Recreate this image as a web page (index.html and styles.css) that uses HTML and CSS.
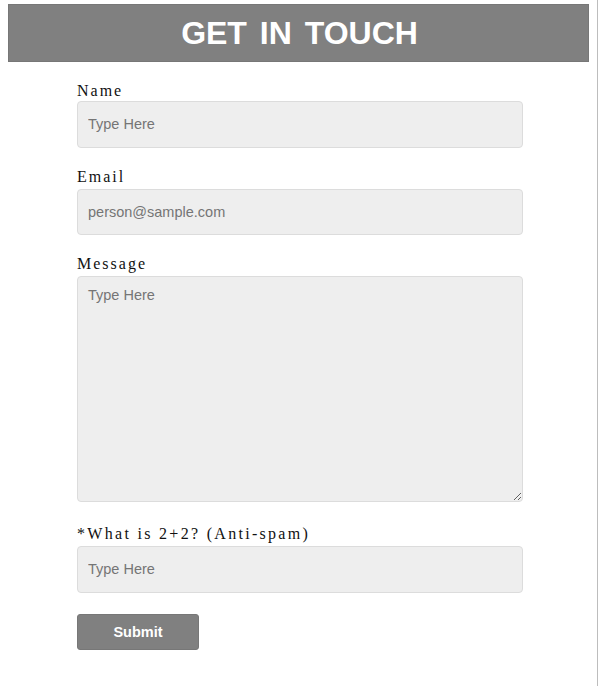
FILE: index.html
```html
<!DOCTYPE html>
<html>
<head>
<meta charset="utf-8">
<link rel="stylesheet" href="styles.css">
</head>
<body>
<div class="page">
  <header class="banner"><h1 class="banner-title">GET IN TOUCH</h1></header>
  <form class="contact">
    <label class="field-label field-label-first" for="name">Name</label>
    <input class="field-input" id="name" type="text" placeholder="Type Here">
    <label class="field-label" for="email">Email</label>
    <input class="field-input" id="email" type="email" placeholder="person@sample.com">
    <label class="field-label" for="msg">Message</label>
    <textarea class="field-input field-area" id="msg" placeholder="Type Here"></textarea>
    <label class="field-label field-label-wide" for="spam">*What is 2+2? (Anti-spam)</label>
    <input class="field-input" id="spam" type="text" placeholder="Type Here">
    <button class="submit" type="button">Submit</button>
  </form>
</div>
</body>
</html>
```

FILE: styles.css
```css
html, body {
  margin: 0;
  padding: 0;
  background: #fff;
}
.page {
  width: 598px;
  min-height: 686px;
  box-sizing: border-box;
  border-right: 1px solid #bdbdbd;
  padding-top: 4px;
}
.banner {
  margin: 0 8px;
  height: 58px;
  box-sizing: border-box;
  background: #808080;
  border: 1px solid #777;
  display: flex;
  align-items: center;
  justify-content: center;
}
.banner-title {
  margin: 0;
  font-family: "Liberation Sans", Arial, sans-serif;
  font-weight: bold;
  font-size: 32px;
  word-spacing: 4px;
  color: #fff;
  line-height: 1;
  padding-left: 2px;
}
.contact {
  width: 446px;
  margin-left: 77px;
  padding-top: 19px;
  display: flex;
  flex-direction: column;
  align-items: flex-start;
}
.field-label {
  font-family: "Liberation Serif", "DejaVu Serif", serif;
  font-size: 16px;
  line-height: 20px;
  letter-spacing: 2px;
  color: #111;
  margin-top: 19px;
  margin-bottom: 2px;
}
.field-label-first {
  margin-top: 0;
  margin-bottom: 0;
}
.field-label-wide {
  margin-top: 22px;
  letter-spacing: 2.3px;
}
.field-input {
  width: 446px;
  height: 46.5px;
  box-sizing: border-box;
  margin: 0;
  padding: 0 10px;
  background: #eee;
  border: 1px solid #dcdcdc;
  border-radius: 4px;
  font-family: "Liberation Sans", Arial, sans-serif;
  font-size: 14.5px;
  color: #333;
  outline: none;
}
.field-input::placeholder {
  color: #757575;
}
.field-area {
  display: block;
  height: 226px;
  padding: 10px;
  resize: both;
}
.submit {
  margin-top: 21px;
  width: 122px;
  height: 36px;
  background: #808080;
  border: 1px solid #777;
  border-radius: 3px;
  color: #fff;
  font-family: "Liberation Sans", Arial, sans-serif;
  font-weight: bold;
  font-size: 14.5px;
  padding: 0;
}
```
